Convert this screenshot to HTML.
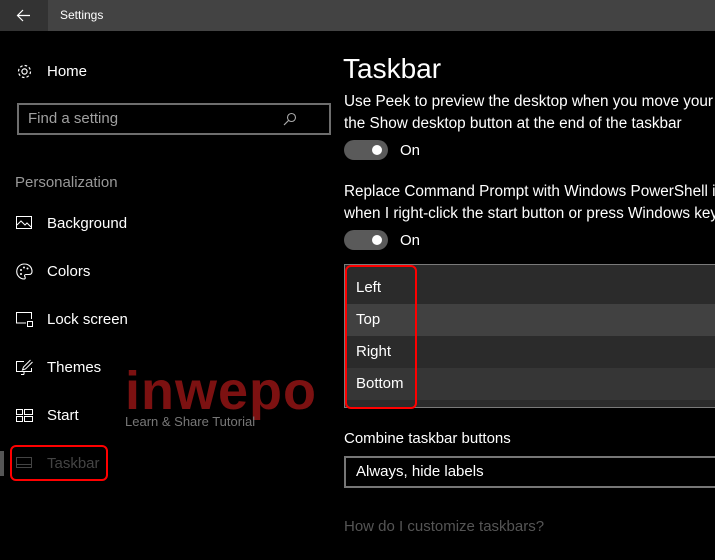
<!DOCTYPE html>
<html><head><meta charset="utf-8"><style>
*{margin:0;padding:0;box-sizing:border-box}
html,body{width:715px;height:560px;overflow:hidden}
body{background:#000;color:#fff;font-family:"Liberation Sans",sans-serif;position:relative;font-size:15px}
.a{position:absolute;white-space:nowrap}
.tb{position:absolute;left:0;top:0;width:715px;height:31px;background:#434343}
.tb .bk{position:absolute;left:0;top:0;width:48px;height:31px;background:#333}
.item{position:absolute;left:47px;font-size:15px}
.ic{position:absolute;left:16px}
.tog{position:absolute;left:344px;width:44px;height:20px;border-radius:10px;background:#5a5a5a}
.tog::after{content:"";position:absolute;left:28px;top:5px;width:10px;height:10px;border-radius:5px;background:#fff}
.row{position:absolute;left:346px;width:369px;height:32px;font-size:15px;padding-left:10px;line-height:32px}
.clip{position:absolute;left:0;top:0;width:715px;height:560px;overflow:hidden}
</style></head><body><div class="clip">
<div class="tb"><div class="bk"></div>
<svg class="a" style="left:16px;top:9px" width="14" height="13" viewBox="0 0 14 13"><path d="M7 1L1.5 6.5L7 12M1.5 6.5H14" stroke="#fff" stroke-width="1.2" fill="none"/></svg>
<div class="a" style="left:60px;top:8px;font-size:12px">Settings</div></div>

<svg class="ic a" style="top:63px" width="17" height="17" viewBox="0 0 17 17"><circle cx="8.5" cy="8.5" r="2.6" fill="none" stroke="#fff" stroke-width="1.2"/><circle cx="8.5" cy="8.5" r="6" fill="none" stroke="#fff" stroke-width="1.2" stroke-dasharray="2.6 2.1"/></svg>
<div class="item" style="top:63px">Home</div>
<div class="a" style="left:17px;top:103px;width:314px;height:32px;border:2px solid #6e6e6e"></div>
<div class="a" style="left:28px;top:110px;font-size:15px;color:#a0a0a0">Find a setting</div>
<svg class="a" style="left:283px;top:112px" width="14" height="14" viewBox="0 0 14 14"><circle cx="8.5" cy="5.5" r="4" fill="none" stroke="#aaa" stroke-width="1.1"/><path d="M5.5 8.5L1 13" stroke="#aaa" stroke-width="1.2"/></svg>
<div class="a" style="left:15px;top:174px;font-size:15px;color:#999">Personalization</div>

<svg class="ic a" style="top:216px" width="17" height="14" viewBox="0 0 17 14"><rect x=".5" y=".5" width="15" height="12" fill="none" stroke="#fff"/><path d="M1 9l4-4 4 4 2-2 4 4" fill="none" stroke="#fff"/></svg>
<div class="item" style="top:215px">Background</div>
<svg class="ic a" style="top:263px" width="17" height="17" viewBox="0 0 17 17"><path d="M8.5 1A7.5 7.5 0 1 0 8 16c1.5 0 1.5-1.5.8-2.5-.7-1 0-2 1.2-2H13c2 0 3-1.3 3-3C16 4 12.7 1 8.5 1z" fill="none" stroke="#fff" stroke-width="1.1"/><circle cx="5" cy="7" r="1" fill="#fff"/><circle cx="8" cy="4.5" r="1" fill="#fff"/><circle cx="11.5" cy="5.5" r="1" fill="#fff"/><circle cx="5" cy="11" r="1" fill="#fff"/></svg>
<div class="item" style="top:263px">Colors</div>
<svg class="ic a" style="top:312px" width="17" height="16" viewBox="0 0 17 16"><path d="M10 11H.5V.5h15V7" fill="none" stroke="#fff"/><rect x="11.5" y="9.5" width="5" height="5" fill="none" stroke="#fff"/></svg>
<div class="item" style="top:311px">Lock screen</div>
<svg class="ic a" style="top:359px" width="17" height="17" viewBox="0 0 17 17"><path d="M8 2.5H.5v10h15V9" fill="none" stroke="#fff"/><path d="M8 15.5h-3M8 12.5v3M14.5 1l-7 7-1 3 3-1 7-7" fill="none" stroke="#fff"/></svg>
<div class="item" style="top:359px">Themes</div>
<svg class="ic a" style="top:409px" width="17" height="14" viewBox="0 0 17 14"><rect x=".5" y=".5" width="6" height="5" fill="none" stroke="#fff"/><rect x="8.5" y=".5" width="8" height="5" fill="none" stroke="#fff"/><rect x=".5" y="7.5" width="6" height="5" fill="none" stroke="#fff"/><rect x="8.5" y="7.5" width="8" height="5" fill="none" stroke="#fff"/></svg>
<div class="item" style="top:407px">Start</div>
<div class="a" style="left:0;top:451px;width:4px;height:25px;background:#555"></div>
<svg class="ic a" style="top:457px" width="17" height="12" viewBox="0 0 17 12"><rect x=".5" y=".5" width="15" height="10" fill="none" stroke="#444"/><path d="M1 7.5h15" stroke="#444"/></svg>
<div class="item" style="top:455px;color:#444">Taskbar</div>
<div class="a" style="left:10px;top:445px;width:98px;height:36px;border:2.5px solid #f00;border-radius:6px"></div>

<div class="a" style="left:125px;top:360px;font-size:54px;font-weight:bold;color:#7c1111;letter-spacing:1px">inwepo</div>
<div class="a" style="left:125px;top:414px;font-size:13px;color:#777">Learn &amp; Share Tutorial</div>

<div class="a" style="left:343px;top:53px;font-size:28px">Taskbar</div>
<div class="a" style="left:344px;top:91px;line-height:22px;font-size:15.3px">Use Peek to preview the desktop when you move your mouse to<br>the Show desktop button at the end of the taskbar</div>
<div class="tog" style="top:140px"></div><div class="a" style="left:400px;top:142px;font-size:15px">On</div>
<div class="a" style="left:344px;top:181px;line-height:22px;font-size:15.3px">Replace Command Prompt with Windows PowerShell in the menu<br>when I right-click the start button or press Windows key + X</div>
<div class="tog" style="top:230px"></div><div class="a" style="left:400px;top:232px;font-size:15px">On</div>

<div class="a" style="left:344px;top:264px;width:380px;height:144px;border:1px solid #7a7a7a;background:#2b2b2b"></div>
<div class="row" style="top:272px;background:#2b2b2b">Left</div>
<div class="row" style="top:304px;background:#414141">Top</div>
<div class="row" style="top:336px;background:#2b2b2b">Right</div>
<div class="row" style="top:368px;background:#363636">Bottom</div>
<div class="a" style="left:345px;top:265px;width:72px;height:144px;border:2.5px solid #f00;border-radius:6px"></div>

<div class="a" style="left:344px;top:430px;font-size:15px">Combine taskbar buttons</div>
<div class="a" style="left:344px;top:456px;width:380px;height:32px;border:2px solid #767676"></div>
<div class="a" style="left:356px;top:463px;font-size:15px">Always, hide labels</div>
<div class="a" style="left:344px;top:518px;font-size:15px;color:#555">How do I customize taskbars?</div>
</div></body></html>
